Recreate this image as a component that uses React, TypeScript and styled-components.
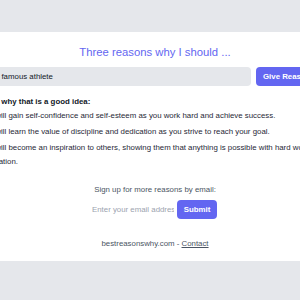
import React from "react";
import styled, { createGlobalStyle } from "styled-components";

const Global = createGlobalStyle`
  html, body { margin: 0; padding: 0; background: #e5e7eb; }
  body { font-family: "Liberation Sans", Arial, sans-serif; overflow: hidden; }
`;

const Page = styled.div`
  width: 300px;
  height: 300px;
  overflow: hidden;
  background: #e5e7eb;
  padding-top: 32px;
  box-sizing: border-box;
`;

const Card = styled.main`
  background: #ffffff;
  box-sizing: border-box;
  padding: 12px 0 11px 10px;
  display: flex;
  flex-direction: column;
  align-items: center;
`;

const Title = styled.h1`
  margin: 0;
  font-size: 11.3px;
  line-height: 16px;
  font-weight: 500;
  color: #6366f1;
  white-space: nowrap;
`;

const Block = styled.section`
  width: 350px;
  flex: 0 0 auto;
  display: flex;
  flex-direction: column;
`;

const AskRow = styled.form`
  display: flex;
  gap: 5px;
  margin: 7px 0 0;
  height: 19px;
`;

const TextInput = styled.input`
  flex: 1;
  min-width: 0;
  border: none;
  outline: none;
  background: #e5e7eb;
  border-radius: 4px;
  padding: 0 4px;
  font-family: inherit;
  font-size: 7.85px;
  color: #111827;
`;

const Button = styled.button<{ $wide?: boolean }>`
  border: none;
  background: #6366f1;
  color: #ffffff;
  border-radius: 4px;
  font-family: inherit;
  font-weight: 700;
  font-size: 7.85px;
  padding: ${(p) => (p.$wide ? "0 14px 0 7px" : "0")};
  width: ${(p) => (p.$wide ? "74px" : "40px")};
  flex: 0 0 auto;
  white-space: nowrap;
  text-align: ${(p) => (p.$wide ? "left" : "center")};
  cursor: pointer;
`;

const Subhead = styled.h2`
  margin: 8.5px 0 0;
  font-size: 7.85px;
  line-height: 13px;
  font-weight: 700;
  color: #111827;
  white-space: nowrap;
`;

const Reasons = styled.ul`
  list-style: none;
  margin: 1.75px 0 0;
  padding: 0;
  display: flex;
  flex-direction: column;
  gap: 2.5px;
`;

const Reason = styled.li`
  font-size: 7.85px;
  line-height: 13.5px;
  color: #1f2937;
`;

const SignupText = styled.p`
  margin: 15.75px 0 0;
  font-size: 7.85px;
  line-height: 12px;
  color: #4b5563;
  white-space: nowrap;
`;

const EmailRow = styled.form`
  display: flex;
  gap: 3px;
  margin: 4px 5px 0 0;
  height: 19px;
`;

const EmailInput = styled.input`
  width: 86px;
  box-sizing: border-box;
  border: none;
  outline: none;
  background: transparent;
  padding: 0 0 0 4px;
  font-family: inherit;
  font-size: 7.85px;
  color: #111827;
  &::placeholder { color: #9ca3af; }
`;

const Footer = styled.footer`
  margin: 19px 0 0;
  font-size: 7.85px;
  line-height: 12px;
  color: #4b5563;
  white-space: nowrap;
`;

const FooterLink = styled.a`
  color: #4b5563;
  text-decoration: underline;
`;

const reasons = [
  "You will gain self-confidence and self-esteem as you work hard and achieve success.",
  "You will learn the value of discipline and dedication as you strive to reach your goal.",
  "You will become an inspiration to others, showing them that anything is possible with hard work and dedication.",
];

export default function App() {
  return (
    <>
      <Global />
      <Page>
        <Card>
          <Title>Three reasons why I should ...</Title>
          <Block>
            <AskRow onSubmit={(e) => e.preventDefault()}>
              <TextInput defaultValue="be a famous athlete" />
              <Button $wide type="submit">Give Reasons</Button>
            </AskRow>
            <Subhead>Read why that is a good idea:</Subhead>
            <Reasons>
              {reasons.map((r) => (
                <Reason key={r}>{r}</Reason>
              ))}
            </Reasons>
          </Block>
          <SignupText>Sign up for more reasons by email:</SignupText>
          <EmailRow onSubmit={(e) => e.preventDefault()}>
            <EmailInput placeholder="Enter your email address" />
            <Button type="submit">Submit</Button>
          </EmailRow>
          <Footer>
            bestreasonswhy.com - <FooterLink href="#">Contact</FooterLink>
          </Footer>
        </Card>
      </Page>
    </>
  );
}
